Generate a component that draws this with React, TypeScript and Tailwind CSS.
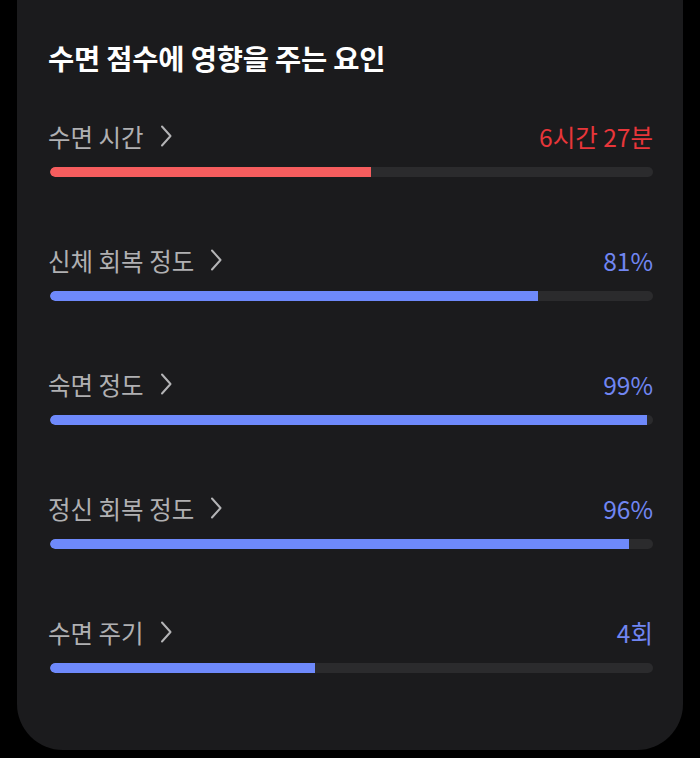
import React from "react";

type Row = { label: string; value: string; pct: number; color: "red" | "blue" };

const rows: Row[] = [
  { label: "수면 시간", value: "6시간 27분", pct: 53.2, color: "red" },
  { label: "신체 회복 정도", value: "81%", pct: 81, color: "blue" },
  { label: "숙면 정도", value: "99%", pct: 99, color: "blue" },
  { label: "정신 회복 정도", value: "96%", pct: 96, color: "blue" },
  { label: "수면 주기", value: "4회", pct: 44, color: "blue" },
];

function Chevron() {
  return (
    <svg width="12" height="22" viewBox="0 0 12 22" className="ml-[16px] mt-[-3px]">
      <path d="M2 1.5 L10.5 11 L2 20.5" fill="none" stroke="#b4b4b6" strokeWidth="2" strokeLinecap="round" strokeLinejoin="round" />
    </svg>
  );
}

export default function App() {
  return (
    <div
      className="w-[700px] h-[758px] bg-black"
      style={{ fontFamily: '"Noto Sans CJK KR", "Noto Sans", sans-serif' }}
    >
      <div className="ml-[17px] w-[666px] h-[750px] bg-[#1b1b1d] rounded-b-[46px] pl-[33px] pr-[30px] pt-[41px]">
        <div className="text-[28.5px] leading-[34px] font-bold text-white tracking-[-0.2px] ml-[-2px]">
          수면 점수에 영향을 주는 요인
        </div>
        <div className="mt-[46px] flex flex-col gap-[68px]">
          {rows.map((r) => (
            <div key={r.label} className="flex flex-col gap-[14px]">
              <div className="flex items-center justify-between h-[32px]">
                <div className="flex items-center text-[24.5px] leading-[32px] text-[#b0b0b2] ml-[-2px]">
                  <span>{r.label}</span>
                  <Chevron />
                </div>
                <div
                  className={
                    r.color === "red"
                      ? "text-[24.5px] leading-[32px] text-[#e8363a]"
                      : "text-[24.5px] leading-[32px] text-[#7186f2]"
                  }
                >
                  {r.value}
                </div>
              </div>
              <div className="h-[10px] w-full rounded-full bg-[#2b2b2d] overflow-hidden">
                <div
                  className={
                    r.color === "red"
                      ? "h-full rounded-l-full bg-[#f65d5e]"
                      : "h-full rounded-l-full bg-[#6e89fb]"
                  }
                  style={{ width: `${r.pct}%` }}
                />
              </div>
            </div>
          ))}
        </div>
      </div>
    </div>
  );
}
